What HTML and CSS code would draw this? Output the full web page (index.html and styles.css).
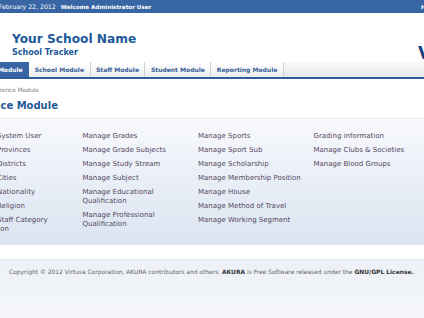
FILE: index.html
```html
<!DOCTYPE html>
<html>
<head>
<meta charset="utf-8">
<link rel="stylesheet" href="styles.css">
</head>
<body>
<div class="page">
  <div class="topbar">
    <span class="date">Wednesday, February 22, 2012</span>
    <span class="welcome">Welcome Administrator User</span>
    <span class="links">Home | Logout</span>
  </div>
  <div class="header">
    <div class="brand">
      <div class="school">Your School Name</div>
      <div class="tracker">School Tracker</div>
    </div>
    <div class="logo">Virtusa</div>
  </div>
  <div class="tabs">
    <span class="tab active">Reference Module</span>
    <span class="tab">School Module</span>
    <span class="tab">Staff Module</span>
    <span class="tab">Student Module</span>
    <span class="tab">Reporting Module</span>
  </div>
  <div class="crumb">Home &gt; Reference Module</div>
  <h1 class="title">Reference Module</h1>
  <div class="panel">
    <ul class="col">
      <li>Manage System User</li>
      <li>Manage Provinces</li>
      <li>Manage Districts</li>
      <li>Manage Cities</li>
      <li>Manage Nationality</li>
      <li>Manage Religion</li>
      <li>Manage Staff Category Designation</li>
    </ul>
    <ul class="col">
      <li>Manage Grades</li>
      <li>Manage Grade Subjects</li>
      <li>Manage Study Stream</li>
      <li>Manage Subject</li>
      <li>Manage Educational Qualification</li>
      <li>Manage Professional Qualification</li>
    </ul>
    <ul class="col">
      <li>Manage Sports</li>
      <li>Manage Sport Sub</li>
      <li>Manage Scholarship</li>
      <li>Manage Membership Position</li>
      <li>Manage House</li>
      <li>Manage Method of Travel</li>
      <li>Manage Working Segment</li>
    </ul>
    <ul class="col">
      <li>Grading information</li>
      <li>Manage Clubs &amp; Societies</li>
      <li>Manage Blood Groups</li>
    </ul>
  </div>
  <div class="gap"></div>
  <div class="footer">Copyright © 2012 Virtusa Corporation, AKURA contributors and others. <b>AKURA</b> is Free Software released under the <b>GNU/GPL License.</b></div>
</div>
</body>
</html>
```
FILE: styles.css
```css
html, body {
  margin: 0;
  padding: 0;
  overflow: hidden;
  background: #f4f6fa;
}
body {
  font-family: "DejaVu Sans", Verdana, sans-serif;
  width: 424px;
  height: 318px;
}
.page {
  margin-left: -100px;
  width: 581px;
}
.topbar {
  display: flex;
  align-items: center;
  height: 13px;
  background: #3866a5;
  color: #fff;
  font-size: 6.2px;
  padding-left: 59px;
  white-space: nowrap;
}
.topbar .date {
  margin-right: 5px;
}
.topbar .welcome {
  font-weight: bold;
  font-size: 5.6px;
}
.topbar .links {
  margin-left: auto;
  width: 60px;
  flex: none;
  font-weight: bold;
  font-size: 5.6px;
}
.header {
  display: flex;
  height: 49px;
  background: #fff;
}
.brand {
  padding: 19px 0 0 112px;
}
.school {
  font-size: 12.2px;
  font-weight: bold;
  color: #21589a;
  line-height: 14px;
}
.tracker {
  font-size: 8px;
  font-weight: bold;
  color: #21589a;
  line-height: 10px;
  margin-top: 2px;
}
.logo {
  margin-left: auto;
  width: 63px;
  flex: none;
  font-size: 17px;
  font-weight: bold;
  color: #173c7c;
  padding-top: 30px;
  white-space: nowrap;
  overflow: hidden;
}
.tabs {
  display: flex;
  height: 15px;
  background: linear-gradient(#fafafa, #e6e6e6);
  border-bottom: 2px solid #2f5d98;
  box-shadow: 0 1px 0 #c9d5e5;
  padding-left: 56px;
}
.tab {
  display: flex;
  align-items: center;
  padding: 0 5.5px;
  font-size: 6px;
  font-weight: bold;
  color: #36609a;
  border-right: 1px solid #cdcdcd;
  background: linear-gradient(#ffffff, #ececec);
  white-space: nowrap;
}
.tab.active {
  background: #3866a5;
  color: #fff;
  border-right: 1px solid #3866a5;
}
.crumb {
  background: #fff;
  font-size: 5.8px;
  color: #777;
  padding: 6px 0 0 61px;
  height: 10px;
  line-height: 10px;
}
.title {
  margin: 0;
  background: #fff;
  font-size: 10px;
  color: #1f5a98;
  padding: 4px 0 0 56px;
  height: 19px;
  line-height: 14px;
}
.panel {
  display: grid;
  grid-template-columns: repeat(4, 105px);
  column-gap: 10.5px;
  padding: 13px 0 0 67px;
  height: 113px;
  border-top: 1px solid #e9edf3;
  background: linear-gradient(#f8f9fc, #dae4f1);
}
.col {
  list-style: none;
  margin: 0;
  padding: 0;
}
.col li {
  font-size: 7px;
  line-height: 9px;
  margin-bottom: 5px;
  color: #55475f;
}
.gap {
  height: 14px;
  background: #fff;
}
.footer {
  height: 60px;
  background: linear-gradient(#edf0f6, #f5f7fa);
  border-top: 1px solid #e6eaf1;
  font-size: 5.95px;
  color: #666;
  padding: 8px 0 0 109px;
  box-sizing: border-box;
  white-space: nowrap;
}
.footer b {
  color: #333;
}
```
